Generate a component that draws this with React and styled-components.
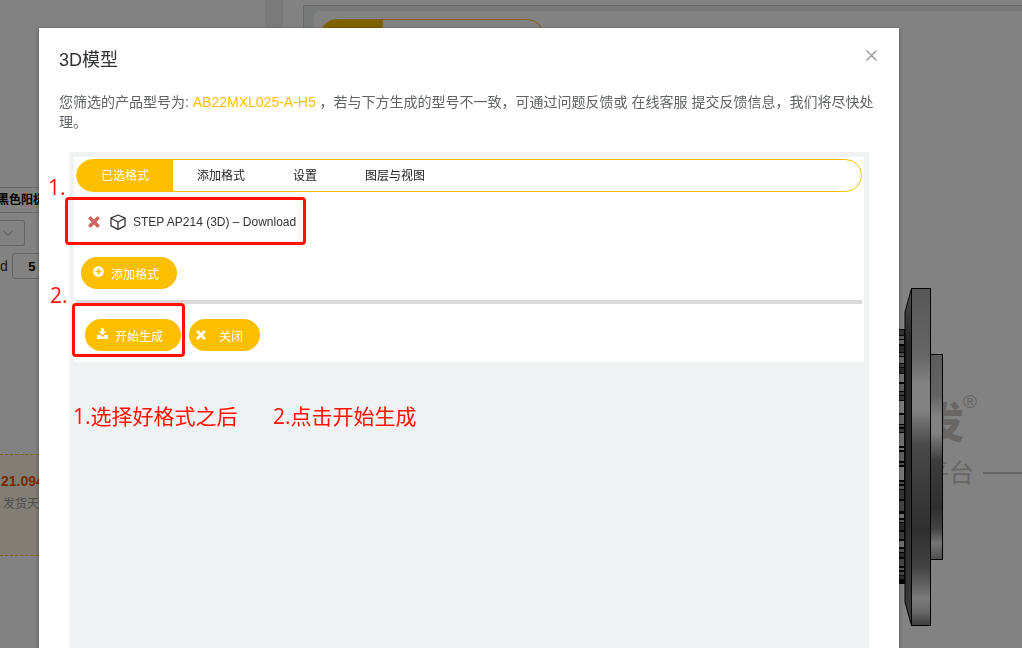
import React from "react";
import styled, { createGlobalStyle } from "styled-components";
import { FaPlusCircle } from "react-icons/fa";

const GlobalStyle = createGlobalStyle`
  * {
    box-sizing: border-box;
  }

  body {
    margin: 0;
    overflow: hidden;
    font-family: "Liberation Sans", "Noto Sans CJK SC", sans-serif;
    font-size: 12px;
    color: #333333;
  }

  button,
  input,
  select {
    font-family: inherit;
  }
`;

const Page = styled.div`
  display: flex;
  height: 100vh;
  overflow: hidden;
  background: #ffffff;
`;

const Sidebar = styled.aside`
  width: 265px;
  flex: none;
  padding-top: 187px;
  overflow: hidden;
`;

const SpecRow = styled.div`
  height: 26px;
  line-height: 24px;
  text-indent: -3px;
  border: 1px solid #c8ccd6;
  border-width: 1px 0;
  font-weight: bold;
  color: #000000;
`;

const SelectField = styled.div`
  position: relative;
  width: 25px;
  margin: 7px 0;

  select {
    display: block;
    appearance: none;
    width: 100%;
    height: 26px;
    border: 1px solid #c4c4ca;
    border-left: 0;
    border-radius: 0 3px 3px 0;
    background: #ffffff;
  }

  svg {
    position: absolute;
    left: 2px;
    top: 9px;
    pointer-events: none;
  }
`;

const SizeField = styled.label`
  display: flex;
  align-items: center;
  gap: 4px;
  font-size: 14px;

  input {
    width: 40px;
    height: 26px;
    border: 1px solid #c4c4ca;
    border-radius: 3px;
    font-size: 13px;
    font-weight: bold;
    text-align: center;
    color: #000000;
  }
`;

const PriceBox = styled.div`
  height: 102px;
  margin-top: 175px;
  padding: 16px 1px;
  border: 1px dashed #fbbf00;
  border-width: 1px 0;
  background: #fff7e5;
`;

const Price = styled.div`
  line-height: 20px;
  font-size: 14px;
  font-weight: bold;
  color: #f05000;
`;

const Delivery = styled.div`
  margin-top: 3px;
  padding-left: 2px;
  line-height: 20px;
  color: #999999;
`;

const Gutter = styled.div`
  width: 18px;
  flex: none;
  background: #f0f0f0;
`;

const Viewer = styled.main`
  flex: 1;
  margin: 5px 0 0 20px;
  padding: 5px 0 0 10px;
  border: 1px solid #cdd1d1;
  border-width: 1px 0 0 1px;
  background: #ebefee;
`;

const Stage = styled.div`
  position: relative;
  height: 100%;
  padding: 8px 6px;
  border-radius: 6px 0 0 0;
  background: #ffffff;
`;

const StageTabs = styled.div`
  width: 224px;
  height: 33px;
  border: 1px solid #fbbf00;
  border-radius: 17px;
  overflow: hidden;

  &::before {
    content: "";
    display: block;
    width: 62px;
    height: 100%;
    background: #fbbf00;
  }
`;

const Watermark = styled.div`
  position: absolute;
  left: ${(props) => props.$left}px;
  top: ${(props) => props.$top}px;
  line-height: 1;
  font-size: ${(props) => props.$size}px;
  font-weight: ${(props) => props.$weight || "normal"};
  color: #cccac9;
`;

const WatermarkLine = styled.div`
  position: absolute;
  left: 669px;
  right: 0;
  top: 461px;
  height: 2px;
  background: #cccac9;
`;

const ModelSvg = styled.svg`
  position: absolute;
  left: 585px;
  top: 276px;
`;

const Overlay = styled.div`
  position: fixed;
  inset: 0;
  padding: 28px 123px 0 39px;
  background: rgba(0, 0, 0, 0.49);
`;

const Dialog = styled.section`
  position: relative;
  display: flex;
  flex-direction: column;
  height: 100%;
  padding: 20px 20px 0;
  background: #ffffff;
  box-shadow: 0 1px 4px rgba(0, 0, 0, 0.4);
`;

const DialogHeader = styled.header`
  display: flex;
  justify-content: space-between;
  align-items: flex-start;
`;

const Title = styled.h2`
  margin: 0;
  line-height: 24px;
  font-size: 18px;
  font-weight: normal;
  color: #303133;
`;

const CloseIconButton = styled.button`
  display: flex;
  padding: 2px;
  border: 0;
  background: none;
  color: #909399;
  cursor: pointer;
`;

const Description = styled.p`
  margin: 20px 0;
  line-height: 20px;
  font-size: 14px;
  color: #606266;

  strong {
    font-weight: normal;
    color: #fbbf00;
  }

  a {
    color: inherit;
    text-decoration: none;
  }
`;

const Frame = styled.div`
  flex: 1;
  margin: 0 10px;
  padding: 5px;
  background: #f1f2f4;
`;

const Panel = styled.div`
  padding: 2px 2px 11px;
  background: #ffffff;
`;

const TabBar = styled.nav`
  display: flex;
  height: 33px;
  border: 1px solid #fbbf00;
  border-radius: 17px;
  overflow: hidden;
`;

const Tab = styled.button`
  padding: 0 24px 2px;
  border: 0;
  background: ${(props) => (props.$active ? "#fbbf00" : "none")};
  color: ${(props) => (props.$active ? "#ffffff" : "#222222")};
  font-size: 12px;
  cursor: pointer;
`;

const FormatRow = styled.div`
  display: flex;
  align-items: center;
  height: 32px;
  margin: 14px 0 19px;
  padding-left: 12px;
  color: #333333;

  a {
    margin-left: 7px;
    color: inherit;
    text-decoration: none;
  }
`;

const RemoveButton = styled.button`
  display: flex;
  margin-right: 10px;
  padding: 0;
  border: 0;
  background: none;
  color: #cd6464;
  cursor: pointer;
`;

const PillButton = styled.button`
  display: inline-flex;
  align-items: center;
  gap: ${(props) => props.$gap || 7}px;
  height: 32px;
  padding: ${(props) => props.$padding || "0 18px 0 12px"};
  border: 0;
  border-radius: 16px;
  background: #fbbf00;
  color: #ffffff;
  font-size: 12px;
  cursor: pointer;

  svg {
    margin-bottom: ${(props) => (props.$centered ? 0 : 4)}px;
  }
`;

const AddArea = styled.div`
  display: flex;
  padding: 0 5px 11px;
  border-bottom: 4px solid #d9d9d9;
`;

const Actions = styled.div`
  display: flex;
  gap: 8px;
  padding: 15px 9px 0;
`;

/* red marks drawn over the dialog */
const MarkBox = styled.div`
  position: absolute;
  left: ${(props) => props.$left}px;
  top: ${(props) => props.$top}px;
  width: ${(props) => props.$width}px;
  height: ${(props) => props.$height}px;
  border: 3px solid #ff1200;
  border-radius: 4px;
  pointer-events: none;
`;

const MarkText = styled.div`
  position: absolute;
  left: ${(props) => props.$left}px;
  top: ${(props) => props.$top}px;
  line-height: 30px;
  font-family: "Open Sans", "Noto Sans CJK SC", sans-serif;
  font-size: 21px;
  color: #ff1200;
  white-space: nowrap;
  pointer-events: none;
`;

const tabs = ["已选格式", "添加格式", "设置", "图层与视图"];

const teeth = [
  [330, 5, "#666666"], [336, 3, "#aaaaaa"], [340, 4, "#cccccc"], [346, 6, "#555555"],
  [353, 3, "#999999"], [357, 6, "#c8c8c8"], [364, 3, "#777777"], [368, 5, "#555555"],
  [374, 8, "#dddddd"], [384, 7, "#bbbbbb"], [392, 3, "#777777"], [396, 4, "#666666"],
  [401, 12, "#f4f4f4"], [415, 9, "#c8c8c8"], [425, 2, "#888888"], [429, 3, "#777777"],
  [433, 13, "#dddddd"], [448, 2, "#dddddd"], [452, 9, "#bbbbbb"], [463, 2, "#999999"],
  [467, 13, "#eeeeee"], [482, 2, "#999999"], [486, 3, "#aaaaaa"], [490, 9, "#666666"],
  [501, 10, "#888888"], [514, 4, "#dddddd"], [520, 2, "#aaaaaa"], [523, 7, "#555555"],
  [532, 7, "#777777"], [541, 6, "#dddddd"], [549, 3, "#999999"], [553, 4, "#555555"],
  [559, 7, "#888888"], [568, 2, "#aaaaaa"], [572, 3, "#888888"], [576, 3, "#555555"]
];

const Model = () => (
  <ModelSvg width="45" height="340" viewBox="899 287 45 340">
    <defs>
      <linearGradient id="plate" x1="0" y1="0" x2="0" y2="1">
        <stop offset="0" stopColor="#adadad" />
        <stop offset="0.2" stopColor="#c8c8c8" />
        <stop offset="0.28" stopColor="#ffffff" />
        <stop offset="0.36" stopColor="#ffffff" />
        <stop offset="0.46" stopColor="#929292" />
        <stop offset="0.58" stopColor="#777777" />
        <stop offset="0.72" stopColor="#5c5c5c" />
        <stop offset="0.83" stopColor="#858585" />
        <stop offset="0.92" stopColor="#f2f2f2" />
        <stop offset="0.96" stopColor="#cccccc" />
        <stop offset="1" stopColor="#777777" />
      </linearGradient>
      <linearGradient id="hub" x1="0" y1="0" x2="0" y2="1">
        <stop offset="0" stopColor="#b4b4b4" />
        <stop offset="0.2" stopColor="#c2c2c2" />
        <stop offset="0.3" stopColor="#ffffff" />
        <stop offset="0.38" stopColor="#ffffff" />
        <stop offset="0.52" stopColor="#777777" />
        <stop offset="0.75" stopColor="#5c5c5c" />
        <stop offset="0.85" stopColor="#858585" />
        <stop offset="0.92" stopColor="#e4e4e4" />
        <stop offset="1" stopColor="#999999" />
      </linearGradient>
      <linearGradient id="bevel" x1="0" y1="0" x2="0" y2="1">
        <stop offset="0" stopColor="#999999" />
        <stop offset="0.16" stopColor="#484848" />
        <stop offset="0.7" stopColor="#555555" />
        <stop offset="1" stopColor="#777777" />
      </linearGradient>
    </defs>
    <rect x="899" y="329" width="6" height="255" fill="#0c0c0c" />
    {teeth.map(([y, height, fill]) => (
      <rect key={y} x="899" y={y} width="5" height={height} fill={fill} />
    ))}
    <path d="M911.5 288.5L905 312V602L911.5 625.5Z" fill="url(#bevel)" stroke="#080808" />
    <rect x="911.5" y="288.5" width="19" height="337" fill="url(#plate)" stroke="#080808" />
    <rect x="930.5" y="354.5" width="12" height="205" fill="url(#hub)" stroke="#080808" />
  </ModelSvg>
);

const CubeIcon = () => (
  <svg width="16" height="18" viewBox="0 0 16 18" fill="none" stroke="#333333" strokeWidth="1.3" strokeLinejoin="round">
    <path d="M8 2L15 5.2V12.8L8 16.4L1 12.8V5.2Z" />
    <path d="M1 5.2L8 9L15 5.2M8 9V16.4" />
  </svg>
);

const CrossIcon = ({ size }) => (
  <svg width={size} height={size} viewBox="0 0 11 11" fill="none" stroke="currentColor" strokeWidth="3.2">
    <path d="M1.2 1.2L9.8 9.8M9.8 1.2L1.2 9.8" />
  </svg>
);

const DownloadIcon = () => (
  <svg width="11" height="11" viewBox="0 0 11 11" fill="currentColor">
    <path d="M4 0H7V3.5H9.3L5.5 7.2L1.7 3.5H4Z" />
    <path d="M0 7H3.2L5.5 9L7.8 7H11V11H0Z" />
  </svg>
);

const CloseIcon = () => (
  <svg width="11" height="11" viewBox="0 0 11 11" stroke="currentColor" strokeWidth="1.1">
    <path d="M0.5 0.5L10.5 10.5M10.5 0.5L0.5 10.5" />
  </svg>
);

const Background = () => (
  <Page>
    <Sidebar>
      <SpecRow>黑色阳极</SpecRow>
      <SelectField>
        <select aria-label="规格" />
        <svg width="12" height="8" viewBox="0 0 12 8" fill="none" stroke="#a0a3aa">
          <path d="M1 1.5L6 6.5L11 1.5" />
        </svg>
      </SelectField>
      <SizeField>
        d
        <input defaultValue="5" />
      </SizeField>
      <PriceBox>
        <Price>21.094</Price>
        <Delivery>发货天</Delivery>
      </PriceBox>
    </Sidebar>
    <Gutter />
    <Viewer>
      <Stage>
        <StageTabs />
        <Watermark $left={608} $top={392} $size={42} $weight={900}>发</Watermark>
        <Watermark $left={649} $top={381} $size={19}>®</Watermark>
        <Watermark $left={610} $top={450} $size={25}>平台</Watermark>
        <WatermarkLine />
        <Model />
      </Stage>
    </Viewer>
  </Page>
);

const App = () => (
  <>
    <GlobalStyle />
    <Background />
    <Overlay>
      <Dialog role="dialog" aria-labelledby="dialog-title">
        <DialogHeader>
          <Title id="dialog-title">3D模型</Title>
          <CloseIconButton aria-label="关闭">
            <CloseIcon />
          </CloseIconButton>
        </DialogHeader>
        <Description>
          您筛选的产品型号为: <strong>AB22MXL025-A-H5</strong> ，若与下方生成的型号不一致，可通过问题反馈或{" "}
          <a href="#service">在线客服</a> 提交反馈信息，我们将尽快处理。
        </Description>
        <Frame>
          <Panel>
            <TabBar>
              {tabs.map((tab, index) => (
                <Tab key={tab} $active={index === 0}>
                  {tab}
                </Tab>
              ))}
            </TabBar>
            <FormatRow>
              <RemoveButton aria-label="删除">
                <CrossIcon size={12} />
              </RemoveButton>
              <CubeIcon />
              <a href="#download">STEP AP214 (3D) – Download</a>
            </FormatRow>
            <AddArea>
              <PillButton>
                <FaPlusCircle size={11} />
                添加格式
              </PillButton>
            </AddArea>
            <Actions>
              <PillButton>
                <DownloadIcon />
                开始生成
              </PillButton>
              <PillButton $gap={13} $padding="0 17px 0 7px" $centered>
                <CrossIcon size={10} />
                关闭
              </PillButton>
            </Actions>
          </Panel>
        </Frame>
        <MarkText $left={9} $top={144}>1.</MarkText>
        <MarkBox $left={26} $top={169} $width={241} $height={48} />
        <MarkText $left={11} $top={252}>2.</MarkText>
        <MarkBox $left={33} $top={275} $width={113} $height={54} />
        <MarkText $left={34} $top={373}>1.选择好格式之后</MarkText>
        <MarkText $left={234} $top={373}>2.点击开始生成</MarkText>
      </Dialog>
    </Overlay>
  </>
);

export default App;
